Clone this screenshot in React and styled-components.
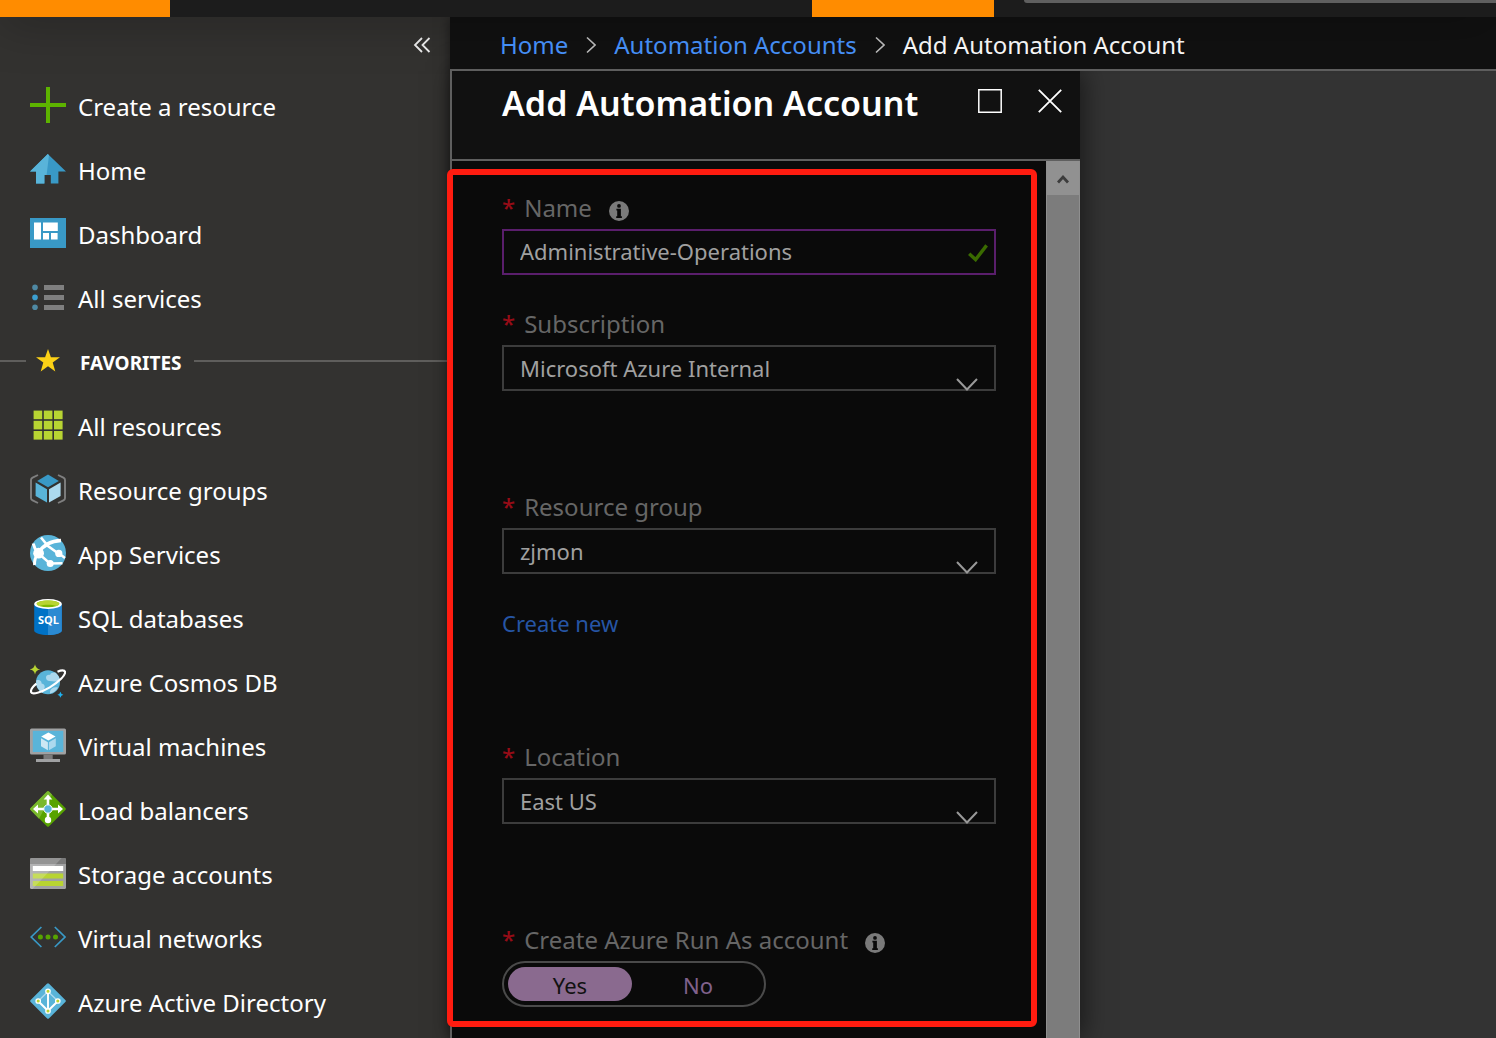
import React, { useState } from "react";
import styled, { createGlobalStyle } from "styled-components";

const GlobalStyle = createGlobalStyle`
  *, *::before, *::after { box-sizing: border-box; }
  body {
    margin: 0;
    background: #333333;
    color: #ffffff;
    font-family: "Noto Sans", "Open Sans", sans-serif;
    font-size: 24px;
    line-height: 32px;
  }
  button, input, select { font: inherit; color: inherit; }
  a { text-decoration: none; }
`;

/* ---------- shell ---------- */

const Page = styled.div`
  min-height: 100vh;
  display: flex;
  flex-direction: column;
  overflow: hidden;
`;

const TopBar = styled.header`
  position: relative;
  z-index: 3;
  display: grid;
  grid-template-columns: 170px 642px 182px 30px 1fr;
  height: 17px;
  background: #1c1c1c;
  box-shadow: 0 0 48px rgba(0, 0, 0, 0.5);
`;

const Accent = styled.div`
  grid-column: ${(p) => p.$column};
  background: #ff8c00;
`;

const SearchEdge = styled.div`
  grid-column: 5;
  height: 3px;
  background: #5f5f5f;
  border-bottom-left-radius: 3px;
`;

const Body = styled.div`
  flex: 1;
  display: flex;
`;

/* ---------- sidebar ---------- */

const Sidebar = styled.nav`
  flex: 0 0 450px;
  background: #333230;
`;

const CollapseRow = styled.div`
  display: flex;
  justify-content: flex-end;
  align-items: center;
  height: 58px;
  padding: 0 16px 2px 0;
`;

const IconButton = styled.button`
  display: grid;
  place-items: center;
  width: ${(p) => p.$size}px;
  height: ${(p) => p.$size}px;
  padding: 0;
  border: 0;
  background: none;
`;

const NavList = styled.ul`
  margin: 0;
  padding: 0;
  list-style: none;
`;

const NavLink = styled.a`
  display: flex;
  align-items: center;
  gap: 12px;
  height: 64px;
  padding-left: 30px;
  color: #ffffff;
  white-space: nowrap;

  svg {
    flex: none;
    margin-bottom: 4px;
  }
`;

const FavoritesRow = styled.div`
  display: flex;
  align-items: center;
  height: 64px;

  svg { flex: none; margin: 0 14px 4px 4px; }
`;

const Rule = styled.span`
  flex: ${(p) => (p.$lead ? "0 0 26px" : "1")};
  height: 2px;
  margin-bottom: 4px;
  background: #5f5e5c;
`;

const FavoritesTitle = styled.h2`
  margin: 0 12px 0 0;
  font-size: 19px;
  font-weight: 700;
`;

/* ---------- main ---------- */

const Main = styled.main`
  position: relative;
  flex: 1;
  min-width: 0;
  display: flex;
  flex-direction: column;
  background: #333333;
  box-shadow: 0 0 12px rgba(0, 0, 0, 0.5);
`;

const Breadcrumb = styled.nav`
  position: relative;
  z-index: 1;
  display: flex;
  align-items: center;
  gap: 18px;
  height: 54px;
  padding: 4px 0 0 50px;
  border-bottom: 2px solid #5f5f5f;
  background: #111111;
  white-space: nowrap;
`;

const CrumbLink = styled.a`
  color: #4894fe;
`;

const Blade = styled.section`
  flex: 1;
  display: flex;
  flex-direction: column;
  width: 630px;
  max-width: 100%;
  border-left: 2px solid #5f5f5f;
  background: #0a0a0a;
  box-shadow: 4px 0 24px rgba(0, 0, 0, 0.5);
`;

const BladeHeader = styled.header`
  display: flex;
  align-items: flex-start;
  justify-content: space-between;
  height: 90px;
  padding: 10px 16px 0 50px;
  border-bottom: 2px solid #5f5f5f;
  background: #111111;
`;

const BladeTitle = styled.h1`
  margin: 0;
  font-size: 34px;
  line-height: 44px;
  font-weight: 600;
  white-space: nowrap;
`;

const BladeActions = styled.div`
  display: flex;
  gap: 32px;
  padding-top: 6px;
`;

const BladeBody = styled.div`
  flex: 1;
  display: flex;
`;

const Form = styled.form`
  position: relative;
  flex: 1;
  min-width: 0;
  align-self: flex-start;
  padding: 26px 50px 20px;
`;

const Highlight = styled.div`
  position: absolute;
  inset: 8px 9px 0 -5px;
  border: 6px solid #ff1c10;
  border-radius: 6px;
  pointer-events: none;
`;

const ScrollTrack = styled.div`
  flex: 0 0 34px;
  border: solid #8f8f8f;
  border-width: 0 1px;
  background: #7c7c7c;
`;

const ScrollButton = styled.button`
  display: grid;
  place-items: center;
  width: 100%;
  height: 34px;
  padding: 2px 0 0;
  border: 0;
  background: #919191;
`;

/* ---------- form fields ---------- */

const Field = styled.div`
  margin-bottom: ${(p) => p.$gap || 0}px;
`;

const LabelRow = styled.div`
  display: flex;
  align-items: center;
  gap: 17px;
  height: 42px;
  color: #666666;

  svg { margin-top: 6px; }
`;

const LabelText = styled.label`
  display: flex;
  gap: 9px;
`;

const Required = styled.span`
  color: #960c17;
  font-weight: 500;
`;

const ControlBox = styled.div`
  position: relative;
  height: 46px;
`;

const TextInput = styled.input`
  display: block;
  width: 100%;
  height: 100%;
  padding: 0 48px 2px 16px;
  border: 2px solid #5a1e6c;
  border-radius: 0;
  outline: 0;
  background: #0a0a0a;
  color: #a0a0a0;
  font-size: 22px;
`;

const Select = styled.select`
  display: block;
  width: 100%;
  height: 100%;
  padding: 0 48px 0 16px;
  border: 2px solid #3c3c3c;
  border-radius: 0;
  outline: 0;
  appearance: none;
  background: #0a0a0a;
  color: #a0a0a0;
  font-size: 22px;
`;

const Adornment = styled.span`
  position: absolute;
  right: ${(p) => p.$right}px;
  bottom: ${(p) => p.$bottom}px;
  display: flex;
  pointer-events: none;
`;

const CreateNew = styled.a`
  display: block;
  width: fit-content;
  margin-top: 33px;
  color: #2655a4;
  font-size: 22px;
`;

const Toggle = styled.div`
  display: flex;
  gap: 4px;
  width: 264px;
  height: 46px;
  padding: 4px;
  border: 2px solid #4a4a4a;
  border-radius: 23px;
`;

const Option = styled.label`
  position: relative;
  flex: 1;
  height: 34px;
  border-radius: 17px;
  background: ${(p) => (p.$on ? "#8a6a8f" : "transparent")};
  color: ${(p) => (p.$on ? "#111111" : "#80618c")};
  font-size: 22px;
  line-height: 36px;
  text-align: center;

  input {
    position: absolute;
    inset: 0;
    width: 100%;
    height: 100%;
    margin: 0;
    opacity: 0;
  }
`;

/* ---------- icons ---------- */

const Icon = ({ children }) => (
  <svg width="36" height="36" viewBox="0 0 36 36" aria-hidden="true">
    {children}
  </svg>
);

const PlusIcon = () => (
  <Icon>
    <path d="M16 0h4v16h16v4H20v16h-4V20H0v-4h16z" fill="#5db300" />
  </Icon>
);

const HomeIcon = () => (
  <Icon>
    <path d="M17.8 3 36 20.6h-7.6v11.8h-7.6V24h-6.4v8.4H6V20.6H0z" fill="#3999c6" />
    <path d="M17.8 3 19 4.2 16.6 24h-2.2v8.4H6V20.6H0z" fill="#59b4d9" />
  </Icon>
);

const DashboardIcon = () => (
  <Icon>
    <path d="M0 3h36v30H0z" fill="#3999c6" />
    <path d="M4 7.4h7v17.2H4zM13 7.4h14.8V16H13zM13 18h6v6.6h-6zM21 18h6.6v6.6H21z" fill="#fff" />
  </Icon>
);

const ListIcon = () => (
  <Icon>
    <circle cx="5" cy="8.4" r="2.8" fill="#4f89a3" />
    <circle cx="5" cy="18.4" r="2.8" fill="#3c9fd0" />
    <circle cx="5" cy="28.2" r="2.8" fill="#4f89a3" />
    <path d="M14 6h20v5H14zM14 16h20v5H14zM14 26h20v5H14z" fill="#7f7f7f" />
  </Icon>
);

const StarIcon = () => (
  <Icon>
    <path d="M18 6l2.9 8.2 9.1.1-7.3 5.2 2.6 9-7.3-5.3-7.3 5.3 2.6-9L6 14.3l9.1-.1z" fill="#fcd116" />
  </Icon>
);

const GridIcon = () => (
  <Icon>
    {[3.6, 13.8, 24].map((y) =>
      [3.6, 13.8, 24].map((x) => (
        <rect key={`${x}-${y}`} x={x} y={y} width="8.6" height="8.6" fill="#b8d432" />
      ))
    )}
  </Icon>
);

const ResourceGroupIcon = () => (
  <Icon>
    <path d="M8 4 2.6 6.6Q1 7.4 1 9v18q0 1.6 1.6 2.4L8 32M28 4l5.400 2.600Q35 7.400 35 9v18q0 1.600-1.600 2.400L28 32" fill="none" stroke="#7f7f7f" strokeWidth="1.9" />
    <path d="M18 3.6 28.8 10 18 16.2 7.2 10z" fill="#3999c6" />
    <path d="M5.6 11.6 17 18.2v13.2L5.6 25z" fill="#59b4d9" />
    <path d="M30.6 11.6 19 18.2v13.2L30.6 25z" fill="#acd9ee" />
  </Icon>
);

const AppServicesIcon = () => (
  <Icon>
    <circle cx="18" cy="18" r="18" fill="#59b4d9" />
    <g fill="none" stroke="#fff">
      <path d="M8 18Q16 6 31 5.500" strokeWidth="3.6" />
      <path d="M11 2.500 18 11l11 8" strokeWidth="2.6" />
      <path d="M8 18l12 10.500 12.500-.2" strokeWidth="2.4" />
      <path d="M29 18.500l6 4.500" strokeWidth="2.4" />
      <path d="M3.200 8.500Q4.500 14 8 18 4 24 4.600 30" strokeWidth="3" />
    </g>
    <circle cx="8.600" cy="18.200" r="5.4" fill="#fff" />
    <circle cx="28.800" cy="18.400" r="3.6" fill="#fff" />
    <circle cx="20.200" cy="28.400" r="3.5" fill="#fff" />
  </Icon>
);

const SqlLetters = styled.text`
  font-family: "Open Sans", sans-serif;
  font-size: 11px;
  font-weight: 700;
  fill: #ffffff;
  text-anchor: middle;
`;

const SqlIcon = () => (
  <Icon>
    <path d="M4.200 5v26.500C4.200 34 10.400 36 18 36s13.800-2 13.800-4.500V5z" fill="#0072c6" />
    <path d="M18 5v31c7.600 0 13.800-2 13.800-4.500V5z" fill="#2b8ad2" />
    <ellipse cx="18" cy="5" rx="13.800" ry="4.900" fill="#fff" />
    <ellipse cx="18" cy="4.800" rx="11.400" ry="3.400" fill="#7fba00" />
    <path d="M6.600 4.800C6.600 2.900 11.700 1.400 18 1.400s11.400 1.500 11.400 3.400c0 .8-1.200 1.500-3 2.100C24.400 6.200 21.400 5.800 18 5.800s-6.400.4-8.400 1.100c-1.800-.6-3-1.300-3-2.100z" fill="#b8d432" />
    <SqlLetters x="18.500" y="25.400">SQL</SqlLetters>
  </Icon>
);

const CosmosIcon = () => (
  <Icon>
    <circle cx="18" cy="19.200" r="12" fill="#59b4d9" />
    <path d="M16 14.500c0-2 1.800-3 4-2.600 1-2.200 3.600-2.800 6-1.900A12 12 0 0 1 30 18c-3 .6-7 .4-10.400.1-2.200-.2-3.600-1.400-3.600-3.600zM6.200 17.500c2.600-1.200 5.600 0 5.400 3 2.400.4 3.600 2.200 3 4.200l-2 5.200A12 12 0 0 1 6.200 17.500zM20 28.500c.6-3 3.600-4.800 8-4a12 12 0 0 1-8 6z" fill="#acd9ee" />
    <path d="M27.500 8.800C31.500 7 34.600 7 35 8.800c.8 3.400-6.200 10.200-15.200 15.600C10.900 29.600 2.300 31.800 1.200 29.200.4 27.300 2.400 24 6.400 20.600" fill="none" stroke="#fff" strokeWidth="2.2" />
    <path d="M5 1.200Q5.800 5.800 10.200 6.400 5.800 7 5 11.400 4.200 7-.2 6.400 4.200 5.800 5 1.200z" fill="#b8d432" />
    <path d="M30.400 28.800q.5 2.500 3 3-2.500.5-3 3-.5-2.500-3-3 2.500-.5 3-3z" fill="#1fb1ee" />
  </Icon>
);

const VmIcon = () => (
  <Icon>
    <rect y="1.400" width="36" height="26.200" rx="1.500" fill="#a0a1a2" />
    <path d="M2.800 3.800h30.500V25H2.800z" fill="#59b4d9" />
    <path d="M13.500 27.600h9.200V32h-9.200z" fill="#7a7a7a" />
    <path d="M6 32h24v3H6z" fill="#a0a1a2" />
    <path d="M18.400 5.400 25.600 9.400l-7.200 4.200L11.200 9.400z" fill="#fff" />
    <path d="M11 11.200l6.900 4v8L11 19.200z" fill="#cde8f4" />
    <path d="M25.800 11.200l-6.900 4v8l6.900-4z" fill="#acd9ee" />
  </Icon>
);

const LoadBalancerIcon = () => (
  <Icon>
    <rect x="5" y="5" width="26" height="26" rx="1.500" transform="rotate(45 18 18)" fill="#57a300" />
    <path d="M17 .6q1-1 2 0l3 3L9 27.800.6 19q-1-1 0-2z" fill="#79b82c" />
    <path d="M18 6v23M6 18h24" stroke="#fff" strokeWidth="2.6" />
    <path d="M18 3.400l4.400 5h-8.800zM3 18l5-4.400v8.800zM33 18l-5-4.400v8.800z" fill="#fff" />
    <circle cx="18" cy="29" r="3.200" fill="#fff" />
    <circle cx="18" cy="18" r="4.200" fill="#59b4d9" stroke="#fff" strokeWidth="1" />
  </Icon>
);

const StorageIcon = () => (
  <Icon>
    <rect y="3" width="36" height="31" rx="1.500" fill="#a0a1a2" />
    <path d="M0 9V4.500Q0 3 1.500 3h33Q36 3 36 4.500V9z" fill="#7a7a7a" />
    <path d="M2.800 11h30.400v5H2.800z" fill="#fff" />
    <path d="M2.800 18.400h30.400v5H2.800zM2.800 26h30.400v5H2.800z" fill="#b8d432" />
    <path d="M1.500 3h30.200L2.600 34H1.500Q0 34 0 32.500v-28Q0 3 1.500 3z" fill="#fff" opacity=".2" />
  </Icon>
);

const VnetIcon = () => (
  <Icon>
    <path d="M11.400 8 1.200 18l10.200 10M24.800 8 35 18 24.800 28" fill="none" stroke="#3999c6" strokeWidth="1.7" />
    <circle cx="10.400" cy="18" r="2.5" fill="#57a300" />
    <circle cx="18" cy="18" r="2.5" fill="#57a300" />
    <circle cx="25.500" cy="18" r="2.5" fill="#57a300" />
  </Icon>
);

const DirectoryIcon = () => (
  <Icon>
    <rect x="5" y="5" width="26" height="26" rx="1.500" transform="rotate(45 18 18)" fill="#59b4d9" />
    <path d="M18 8.400 8.300 18M18 8.400 27.800 18" stroke="#acd9ee" strokeWidth="1.4" />
    <path d="M18 8v20M8 18l10 9.800L28 18" fill="none" stroke="#fff" strokeWidth="1.9" />
    {[[18, 8.3], [8.2, 18], [27.8, 18], [18, 28]].map(([x, y]) => (
      <circle key={`${x}-${y}`} cx={x} cy={y} r="2.200" fill="#b8d432" stroke="#fff" strokeWidth="1.3" />
    ))}
  </Icon>
);

const InfoIcon = () => (
  <svg width="20" height="20" viewBox="0 0 20 20" role="img" aria-label="Info">
    <circle cx="10" cy="10" r="10" fill="#7a7a7a" />
    <circle cx="10" cy="4.900" r="1.9" fill="#0a0a0a" />
    <path d="M7.400 7.800h4.500v7.400h1v1.800H7.200v-1.800h1V9.600h-.8z" fill="#0a0a0a" />
  </svg>
);

const Chevron = () => (
  <svg width="22" height="13" viewBox="0 0 22 13" aria-hidden="true">
    <path d="M1 1l10 10.500L21 1" fill="none" stroke="#999999" strokeWidth="2" />
  </svg>
);

const CrumbArrow = () => (
  <svg width="10" height="18" viewBox="0 0 10 18" aria-hidden="true">
    <path d="M1 1.500 9 9l-8 7.500" fill="none" stroke="#c0c0c0" strokeWidth="1.6" />
  </svg>
);

/* ---------- data ---------- */

const primaryLinks = [
  ["Create a resource", PlusIcon],
  ["Home", HomeIcon],
  ["Dashboard", DashboardIcon],
  ["All services", ListIcon],
];

const favoriteLinks = [
  ["All resources", GridIcon],
  ["Resource groups", ResourceGroupIcon],
  ["App Services", AppServicesIcon],
  ["SQL databases", SqlIcon],
  ["Azure Cosmos DB", CosmosIcon],
  ["Virtual machines", VmIcon],
  ["Load balancers", LoadBalancerIcon],
  ["Storage accounts", StorageIcon],
  ["Virtual networks", VnetIcon],
  ["Azure Active Directory", DirectoryIcon],
];

const Links = ({ items }) => (
  <NavList>
    {items.map(([label, Glyph]) => (
      <li key={label}>
        <NavLink href="#">
          <Glyph />
          {label}
        </NavLink>
      </li>
    ))}
  </NavList>
);

const FieldLabel = ({ htmlFor, id, as, info, children }) => (
  <LabelRow>
    <LabelText as={as} id={id} htmlFor={htmlFor}>
      <Required>*</Required>
      {children}
    </LabelText>
    {info && <InfoIcon />}
  </LabelRow>
);

const SelectField = ({ id, label, value, gap, children }) => (
  <Field $gap={gap}>
    <FieldLabel htmlFor={id}>{label}</FieldLabel>
    <ControlBox>
      <Select id={id} defaultValue={value}>
        <option>{value}</option>
      </Select>
      <Adornment $right={18} $bottom={0}>
        <Chevron />
      </Adornment>
    </ControlBox>
    {children}
  </Field>
);

export default function App() {
  const [runAs, setRunAs] = useState("Yes");

  return (
    <Page>
      <GlobalStyle />
      <TopBar>
        <Accent $column={1} />
        <Accent $column={3} />
        <SearchEdge />
      </TopBar>
      <Body>
        <Sidebar aria-label="Services">
          <CollapseRow>
            <IconButton $size={24} aria-label="Collapse menu">
              <svg width="18" height="16" viewBox="0 0 18 16">
                <path d="M9 1 2 8l7 7M16.500 1l-7 7 7 7" fill="none" stroke="#f0f0f0" strokeWidth="1.8" />
              </svg>
            </IconButton>
          </CollapseRow>
          <Links items={primaryLinks} />
          <FavoritesRow>
            <Rule $lead />
            <StarIcon />
            <FavoritesTitle>FAVORITES</FavoritesTitle>
            <Rule />
          </FavoritesRow>
          <Links items={favoriteLinks} />
        </Sidebar>

        <Main>
          <Breadcrumb aria-label="Breadcrumb">
            <CrumbLink href="#">Home</CrumbLink>
            <CrumbArrow />
            <CrumbLink href="#">Automation Accounts</CrumbLink>
            <CrumbArrow />
            <span>Add Automation Account</span>
          </Breadcrumb>

          <Blade>
            <BladeHeader>
              <BladeTitle>Add Automation Account</BladeTitle>
              <BladeActions>
                <IconButton $size={28} aria-label="Maximize">
                  <svg width="24" height="24" viewBox="0 0 24 24">
                    <path d="M.8.800h22.400v22.400H.8z" fill="none" stroke="#fff" strokeWidth="1.5" />
                  </svg>
                </IconButton>
                <IconButton $size={28} aria-label="Close">
                  <svg width="24" height="24" viewBox="0 0 24 24">
                    <path d="M.8.800l22.400 22.400M23.200.8.800 23.200" stroke="#fff" strokeWidth="1.8" />
                  </svg>
                </IconButton>
              </BladeActions>
            </BladeHeader>

            <BladeBody>
              <Form>
                <Field $gap={28}>
                  <FieldLabel htmlFor="name" info>Name</FieldLabel>
                  <ControlBox>
                    <TextInput id="name" type="text" defaultValue="Administrative-Operations" />
                    <Adornment $right={8} $bottom={13}>
                      <svg width="20" height="18" viewBox="0 0 20 18" aria-hidden="true">
                        <path d="M1.200 9.800 7.600 15.600 18.600 1.400" fill="none" stroke="#3a6b00" strokeWidth="3.4" />
                      </svg>
                    </Adornment>
                  </ControlBox>
                </Field>

                <SelectField id="subscription" label="Subscription" value="Microsoft Azure Internal" gap={95} />

                <SelectField id="group" label="Resource group" value="zjmon" gap={97}>
                  <CreateNew href="#">Create new</CreateNew>
                </SelectField>

                <SelectField id="location" label="Location" value="East US" gap={95} />

                <Field>
                  <FieldLabel as="div" id="run-as" info>Create Azure Run As account</FieldLabel>
                  <Toggle role="radiogroup" aria-labelledby="run-as">
                    {["Yes", "No"].map((choice) => (
                      <Option key={choice} $on={runAs === choice}>
                        <input
                          type="radio"
                          name="run-as"
                          value={choice}
                          checked={runAs === choice}
                          onChange={() => setRunAs(choice)}
                        />
                        {choice}
                      </Option>
                    ))}
                  </Toggle>
                </Field>
                <Highlight />
              </Form>
              <ScrollTrack>
                <ScrollButton type="button" aria-label="Scroll up">
                  <svg width="12" height="10" viewBox="0 0 12 10">
                    <path d="M1 8.500 6 3l5 5.500" fill="none" stroke="#3c3c3c" strokeWidth="2.8" />
                  </svg>
                </ScrollButton>
              </ScrollTrack>
            </BladeBody>
          </Blade>
        </Main>
      </Body>
    </Page>
  );
}
